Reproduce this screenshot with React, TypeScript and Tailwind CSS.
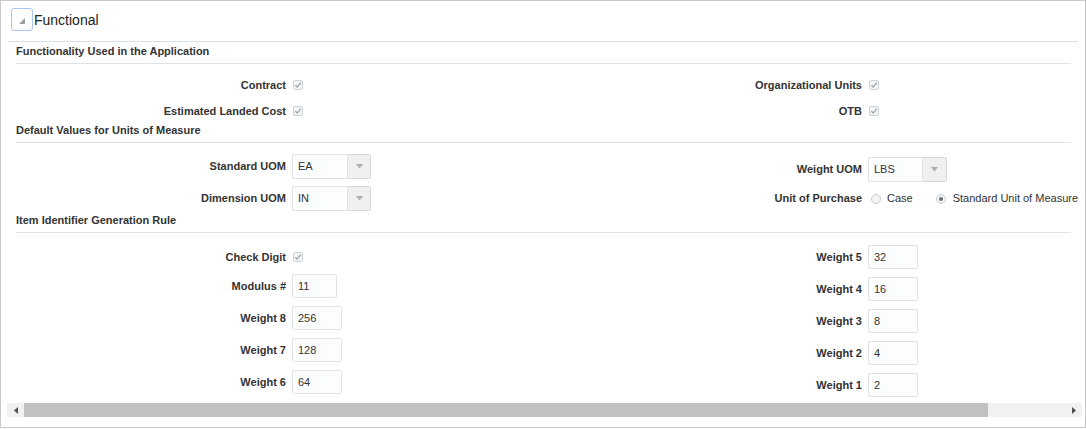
import React from "react";

const labelCls = "w-[270px] shrink-0 text-right text-[11px] font-bold text-[#333]";

function Check() {
  return (
    <span className="ml-[7px] flex h-[10px] w-[10px] shrink-0 items-center justify-center rounded-[2px] border border-[#cfd3d6] bg-[#f4f5f6]">
      <svg width="8" height="8" viewBox="0 0 8 8">
        <path d="M1.3 4.2 L3.1 6 L6.8 1.8" fill="none" stroke="#a3a8ac" strokeWidth="1.3" />
      </svg>
    </span>
  );
}

function Radio({ on }: { on?: boolean }) {
  return (
    <span className="flex h-[10px] w-[10px] shrink-0 items-center justify-center rounded-full border border-[#c8ccd0] bg-[#f3f4f5]">
      {on ? <span className="h-[4px] w-[4px] rounded-full bg-[#6b6f73]" /> : null}
    </span>
  );
}

function Field({ value, w = "w-[50px]" }: { value: string; w?: string }) {
  return (
    <div
      className={`ml-[6px] flex h-[24px] ${w} shrink-0 items-center rounded-[2px] border border-[#dfe3e6] bg-[#fcfdfe] pl-[5px] text-[11px] text-[#333]`}
    >
      {value}
    </div>
  );
}

function Select({ value, text = "w-[55px]", btn = "w-[24px]" }: { value: string; text?: string; btn?: string }) {
  return (
    <div className="ml-[6px] flex h-[25px] shrink-0">
      <div
        className={`flex ${text} items-center rounded-l-[2px] border border-[#dfe3e6] bg-[#fcfdfe] pl-[5px] text-[11px] text-[#333]`}
      >
        {value}
      </div>
      <div className={`flex ${btn} items-center justify-center rounded-r-[2px] border border-l-0 border-[#d5d9dc] bg-[#eef0f1]`}>
        <svg width="7" height="5" viewBox="0 0 7 5">
          <path d="M0 0 H7 L3.5 4.5 Z" fill="#a9adb1" />
        </svg>
      </div>
    </div>
  );
}

function Row({ label, children, h = "h-[26px]" }: { label: string; children: React.ReactNode; h?: string }) {
  return (
    <div className={`flex ${h} items-center`}>
      <div className={labelCls}>{label}</div>
      {children}
    </div>
  );
}

function Heading({ title, mt }: { title: string; mt: string }) {
  return (
    <div className={`${mt} border-b border-[#dde3e8] pb-[5px] text-[11px] leading-[13px] font-bold text-[#333]`}>
      {title}
    </div>
  );
}

export default function App() {
  return (
    <div className="relative h-[429px] w-[1086px] overflow-hidden bg-white font-['Liberation_Sans',Arial,sans-serif]">
      <div className="h-[428px] border border-[#c9c9c9]">
        <div className="flex h-[40px] items-start pl-[10px] pt-[7px]">
          <div className="flex h-[23px] w-[22px] items-end justify-end rounded-[3px] border border-[#a6c6ef] bg-white pb-[6px] pr-[7px]">
            <svg width="6" height="6" viewBox="0 0 6 6">
              <path d="M6 0 V6 H0 Z" fill="#9a9ea2" />
            </svg>
          </div>
          <div className="ml-[1px] pt-[1px] text-[14px] leading-[23px] text-[#222]">Functional</div>
        </div>
        <div className="mx-[7px] border-t border-[#d9e0e5]" />

        <div className="w-[1070px] pl-[15px]">
          <Heading title="Functionality Used in the Application" mt="mt-[3px]" />
          <div className="flex pt-[8px]">
            <div className="w-[576px] shrink-0">
              <Row label="Contract">
                <Check />
              </Row>
              <Row label="Estimated Landed Cost">
                <Check />
              </Row>
            </div>
            <div className="shrink-0">
              <Row label="Organizational Units">
                <Check />
              </Row>
              <Row label="OTB">
                <Check />
              </Row>
            </div>
          </div>

          <Heading title="Default Values for Units of Measure" mt="mt-[0px]" />
          <div className="flex">
            <div className="flex w-[576px] shrink-0 flex-col gap-[7px] pt-[11px]">
              <Row label="Standard UOM" h="h-[25px]">
                <Select value="EA" text="w-[56px]" btn="w-[23px]" />
              </Row>
              <Row label="Dimension UOM" h="h-[25px]">
                <Select value="IN" text="w-[56px]" btn="w-[23px]" />
              </Row>
            </div>
            <div className="flex shrink-0 flex-col gap-[4px] pt-[14px]">
              <Row label="Weight UOM" h="h-[25px]">
                <Select value="LBS" />
              </Row>
              <Row label="Unit of Purchase" h="h-[25px]">
                <div className="ml-[9px] flex shrink-0 items-center text-[11px] text-[#333]">
                  <Radio />
                  <span className="ml-[6px]">Case</span>
                  <span className="ml-[23px]">
                    <Radio on />
                  </span>
                  <span className="ml-[7px] whitespace-nowrap">Standard Unit of Measure</span>
                </div>
              </Row>
            </div>
          </div>

          <Heading title="Item Identifier Generation Rule" mt="mt-[3px]" />
          <div className="flex">
            <div className="w-[576px] shrink-0 pt-[12px]">
              <Row label="Check Digit" h="h-[24px]">
                <Check />
              </Row>
              <div className="mt-[5px] flex flex-col gap-[8px]">
                <Row label="Modulus #" h="h-[24px]">
                  <Field value="11" w="w-[45px]" />
                </Row>
                <Row label="Weight 8" h="h-[24px]">
                  <Field value="256" />
                </Row>
                <Row label="Weight 7" h="h-[24px]">
                  <Field value="128" />
                </Row>
                <Row label="Weight 6" h="h-[24px]">
                  <Field value="64" />
                </Row>
              </div>
            </div>
            <div className="flex shrink-0 flex-col gap-[8px] pt-[12px]">
              <Row label="Weight 5" h="h-[24px]">
                <Field value="32" />
              </Row>
              <Row label="Weight 4" h="h-[24px]">
                <Field value="16" />
              </Row>
              <Row label="Weight 3" h="h-[24px]">
                <Field value="8" />
              </Row>
              <Row label="Weight 2" h="h-[24px]">
                <Field value="4" />
              </Row>
              <Row label="Weight 1" h="h-[24px]">
                <Field value="2" />
              </Row>
            </div>
          </div>
        </div>

        <div className="absolute left-[7px] top-[403px] flex h-[14px] w-[1075px] bg-[#f1f1f1]">
          <div className="flex w-[17px] items-center justify-center">
            <svg width="4" height="7" viewBox="0 0 4 7">
              <path d="M4 0 V7 L0 3.5 Z" fill="#505050" />
            </svg>
          </div>
          <div className="w-[964px] bg-[#c1c1c1]" />
          <div className="flex-1" />
          <div className="flex w-[17px] items-center justify-center">
            <svg width="4" height="7" viewBox="0 0 4 7">
              <path d="M0 0 V7 L4 3.5 Z" fill="#505050" />
            </svg>
          </div>
        </div>
      </div>
    </div>
  );
}
